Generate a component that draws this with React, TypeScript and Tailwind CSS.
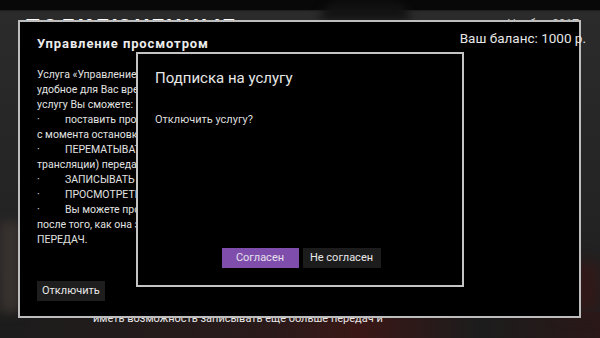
const lines: { bullet?: boolean; text: string }[] = [
  { text: "Услуга «Управление просмотром» позволяет смотреть передачи в" },
  { text: "удобное для Вас время. Подключив данную" },
  { text: "услугу Вы сможете:" },
  { bullet: true, text: "поставить просмотр на паузу и продолжить его" },
  { text: "с момента остановки;" },
  { bullet: true, text: "ПЕРЕМАТЫВАТЬ (перемотка назад до начала" },
  { text: "трансляции) передачи;" },
  { bullet: true, text: "ЗАПИСЫВАТЬ передачи;" },
  { bullet: true, text: "ПРОСМОТРЕТЬ пропущенные передачи;" },
  { bullet: true, text: "Вы можете просмотреть передачу" },
  { text: "после того, как она закончилась, в АРХИВЕ" },
  { text: "ПЕРЕДАЧ." },
];

// page behind the dialogs (blurred in the screenshot)
const BackgroundPage = () => {
  return (
    <div className="absolute inset-0 flex flex-col bg-[linear-gradient(180deg,#070707_0px,#0d0d0d_8px,#2b2b2b_12px,#242424_60%,#1d1d1d_100%)]">
      <div className="h-[10px] bg-[#080808]" />
      <div className="flex flex-row justify-between items-start pl-[25px] pr-[21px]">
        <span className="mt-[4px] text-[22px] leading-[28px] font-bold tracking-[2px] text-white">ПОДКЛЮЧЕННЫЕ</span>
        <span className="mt-[6px] text-[12px] leading-[16px] text-[#cfcfcf]">Ноябрь 2017</span>
      </div>
      <div className="flex-1 flex flex-row justify-between">
        <div className="w-[20px] mt-[180px] bg-[#3a3330] blur-[6px]" />
        <div className="w-[40px] mt-[220px] bg-[#321818] blur-[8px]" />
      </div>
      <div className="h-[26px] pl-[93px] bg-[linear-gradient(90deg,#1c1c1c_0%,#2a1a1a_45%,#3a1716_60%,#1c1c1c_80%,#2a1818_100%)] text-[11px] leading-[14px] text-[#e8e8e8] whitespace-nowrap">
        иметь возможность записывать еще больше передач и
      </div>
    </div>
  );
};

const ConfirmDialog = () => {
  return (
    <div className="absolute left-[136px] top-[52px] w-[328px] h-[235px] bg-black border-2 border-[#c4c4c4] flex flex-col px-[17px]">
      <div className="mt-[14px] text-[15px] leading-[20px] text-[#e8e8e8]">Подписка на услугу</div>
      <div className="mt-[25px] text-[11px] leading-[14px] text-[#dedede]">Отключить услугу?</div>
      <div className="mt-auto mb-[17px] flex flex-row justify-center gap-[4px] pl-[2px]">
        <button className="w-[77px] h-[20px] bg-[#7f4dab] text-[11px] text-[#e6e0ee]">Согласен</button>
        <button className="w-[78px] h-[20px] bg-[#1c1c1c] text-[11px] text-[#e8e8e8]">Не согласен</button>
      </div>
    </div>
  );
};

const ServiceDialog = () => {
  return (
    <div className="absolute left-[18px] top-[20px] w-[563px] h-[298px] bg-black border-2 border-[#bdbdbd] px-[17px] flex flex-col items-start">
      <div className="w-full mt-[7px] flex flex-row justify-between items-start">
        <span className="mt-[6px] text-[13px] leading-[18px] font-bold tracking-[0.9px] text-[#ececec]">Управление просмотром</span>
        <span className="relative z-10 -mr-[24px] text-[13.5px] leading-[18px] text-[#e6e6e6] whitespace-nowrap">Ваш баланс: 1000 р.</span>
      </div>
      <div className="mt-[14px] text-[10.5px] leading-[15px] text-[#e2e2e2] whitespace-nowrap">
        {lines.map((l, i) => (
          <div key={i} className="flex flex-row">
            {l.bullet ? <span className="w-[28px]">·</span> : null}
            <span>{l.text}</span>
          </div>
        ))}
      </div>
      <button className="mt-[34px] h-[20px] px-[5px] bg-[#1e1e1e] text-[11px] text-[#e8e8e8]">Отключить</button>
    </div>
  );
};

const App = () => {
  return (
    <div className="relative w-[600px] h-[338px] overflow-hidden font-['Roboto',sans-serif] bg-[#262626]">
      <BackgroundPage />
      <div className="absolute left-[320px] top-[2px] w-[90px] h-[18px] rounded-t-full bg-[#121212] blur-[4px]" />
      <ServiceDialog />
      <ConfirmDialog />
    </div>
  );
};

export default App;
